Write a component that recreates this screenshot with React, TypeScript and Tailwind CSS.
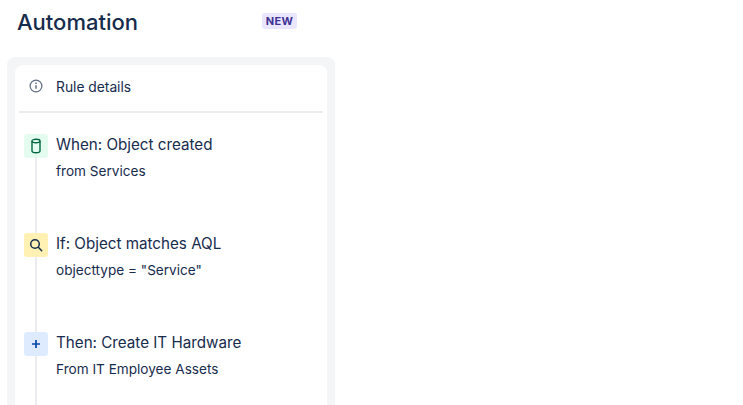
const steps = [
  {
    title: "When: Object created",
    detail: "from Services",
    box: "bg-[#e3fcef]",
    icon: (
      <svg width="12" height="16" viewBox="0 0 12 16" fill="none" stroke="#006644" strokeWidth="1.4">
        <ellipse cx="6" cy="3" rx="4" ry="1.7" />
        <path d="M2 3v10c0 1 1.8 1.7 4 1.7s4-.7 4-1.7V3" />
      </svg>
    ),
  },
  {
    title: "If: Object matches AQL",
    detail: 'objecttype = "Service"',
    box: "bg-[#fff0b3]",
    icon: (
      <svg width="14" height="14" viewBox="0 0 14 14" fill="none" stroke="#172b4d" strokeWidth="1.5" strokeLinecap="round">
        <circle cx="6" cy="6" r="4.3" />
        <path d="M9.3 9.3l3.4 3.4" />
      </svg>
    ),
  },
  {
    title: "Then: Create IT Hardware",
    detail: "From IT Employee Assets",
    box: "bg-[#deebff]",
    icon: (
      <svg width="10" height="10" viewBox="0 0 10 10" fill="none" stroke="#0747a6" strokeWidth="1.7">
        <path d="M5 1v8M1 5h8" />
      </svg>
    ),
  },
];

export default function App() {
  return (
    <div className="h-screen overflow-hidden bg-white font-['Inter',sans-serif] text-[#172b4d]">
      <div className="w-[335px] h-full flex flex-col pl-[7px]">
        {/* Header */}
        <div className="h-[57px] shrink-0 flex items-start justify-between pl-2.5 pr-[38px] pt-[7px]">
          <h1 className="text-[22px] leading-[30px] font-medium">Automation</h1>
          <span className="mt-[6px] h-4 w-[35px] rounded-[3px] bg-[#eae6ff] text-[#403294] text-[11px] leading-4 font-bold tracking-[0.3px] text-center">
            NEW
          </span>
        </div>

        {/* Rule panel */}
        <div className="flex-1 min-h-0 rounded-t-lg bg-[#f4f5f7] px-2 pt-2">
          <div className="h-full rounded-t-lg bg-white px-1">
            <div className="h-[48px] flex items-center gap-[13px] pl-2.5 border-b-2 border-[#ebecf0]">
              <svg width="14" height="14" viewBox="0 0 14 14" fill="none" stroke="#5e6c84" strokeWidth="1.2" className="-mt-[4px]">
                <circle cx="7" cy="7" r="5.9" />
                <path d="M7 6.2v3.6" strokeWidth="1.5" />
                <path d="M7 3.6v1.4" strokeWidth="1.5" />
              </svg>
              <span className="text-[13.8px] leading-5 -mt-[3px]">Rule details</span>
            </div>

            {/* Steps */}
            <div className="pt-[21px] pl-[5px]">
              {steps.map((step) => (
                <div key={step.title} className="h-[99px] flex gap-2">
                  <div className="w-6 flex flex-col items-center">
                    <div className={`w-6 h-6 shrink-0 rounded-[3px] flex items-center justify-center ${step.box}`}>
                      {step.icon}
                    </div>
                    <div className="w-0.5 flex-1 bg-[#ebecf0]" />
                  </div>
                  <div>
                    <div className="text-[15.2px] leading-5 mt-px">{step.title}</div>
                    <div className="text-[13.6px] leading-5 mt-[6px]">{step.detail}</div>
                  </div>
                </div>
              ))}
            </div>
          </div>
        </div>
      </div>
    </div>
  );
}
